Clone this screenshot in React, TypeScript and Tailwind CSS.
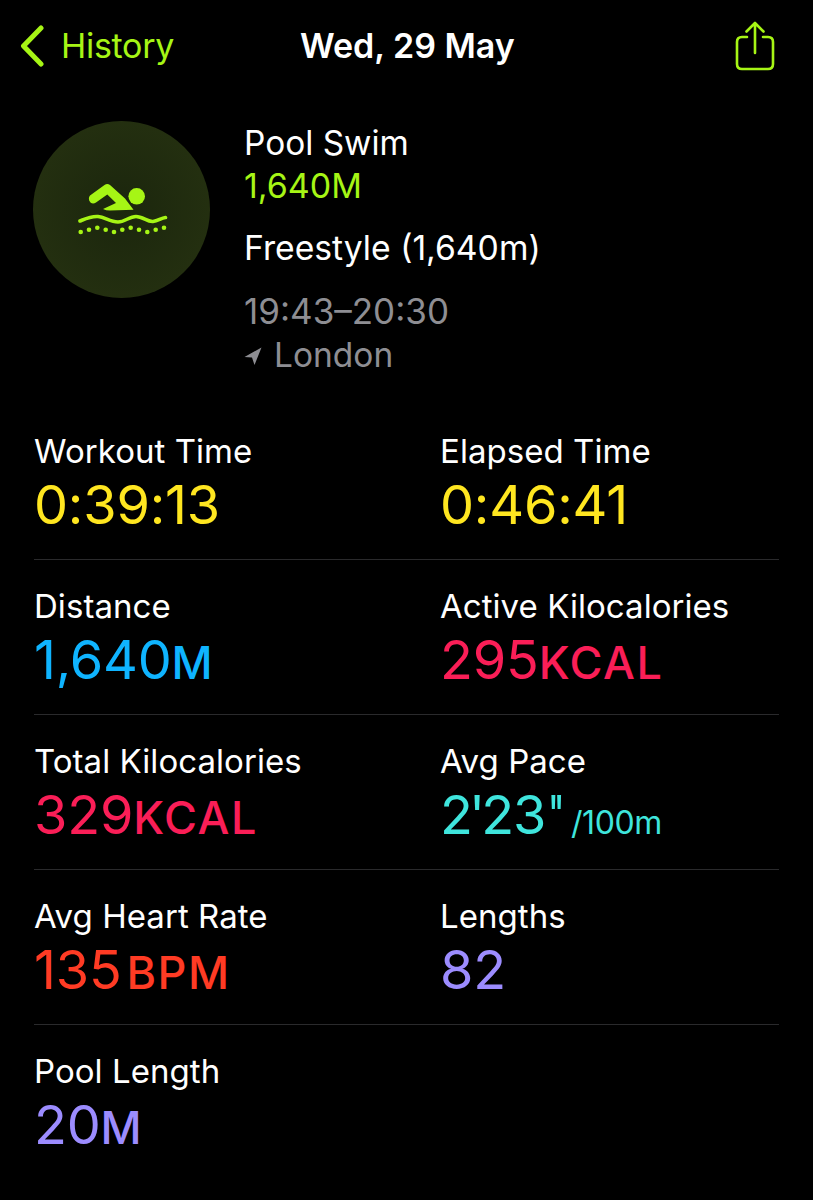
import React from "react";

type Metric = { label: string; value: string; unit?: string; color: string; wideUnit?: boolean };

const rows: Metric[][] = [
  [
    { label: "Workout Time", value: "0:39:13", color: "text-[#ffe620]" },
    { label: "Elapsed Time", value: "0:46:41", color: "text-[#ffe620]" },
  ],
  [
    { label: "Distance", value: "1,640", unit: "M", color: "text-[#0fb4ff]" },
    { label: "Active Kilocalories", value: "295", unit: "KCAL", color: "text-[#fa1e57]" },
  ],
  [
    { label: "Total Kilocalories", value: "329", unit: "KCAL", color: "text-[#fa1e57]" },
    { label: "Avg Pace", value: "", color: "text-[#3fe5dd]" },
  ],
  [
    { label: "Avg Heart Rate", value: "135", unit: "BPM", wideUnit: true, color: "text-[#ff3b24]" },
    { label: "Lengths", value: "82", color: "text-[#9c8cff]" },
  ],
  [{ label: "Pool Length", value: "20", unit: "M", color: "text-[#9c8cff]" }],
];

function Cell({ m }: { m: Metric }) {
  return (
    <div className="flex flex-col">
      <div className="text-[33px] leading-[44px] text-white tracking-[0.05px]">{m.label}</div>
      <div className={`flex items-baseline h-[62px] text-[54px] leading-[64px] tracking-[-0.2px] ${m.color}`}>
        {m.value === "" ? (
          <>
            <span className="tracking-[-4px]">2'</span>
            <span className="tracking-[-1px]">23</span>
            <span className="mr-[14px] font-light tracking-[-10px]">''</span>
            <span className="text-[32px] tracking-[-0.4px]">/100m</span>
          </>
        ) : (
          <span>{m.value}</span>
        )}
        {m.unit && (
          <span className={m.wideUnit ? "ml-[5px] text-[45px] font-medium tracking-[1.5px]" : "text-[45px] font-medium tracking-[1.5px]"}>
            {m.unit}
          </span>
        )}
      </div>
    </div>
  );
}

function SwimIcon() {
  return (
    <svg width="90" height="52" viewBox="0 0 90 52" fill="none" className="ml-[2px]">
      <circle cx="58.7" cy="12.3" r="8.3" fill="#a6f515" />
      <path
        d="M12 11.5 L26.5 1 Q29.3 -0.8 32 1 L47 14.5 L55.5 25.7 L32 26.5 Q28 26.5 25 25 L38 19 L29.3 10.5 L18 18.5 Q15 20.5 12.5 18.5 Q9.5 15 12 11.5 Z"
        fill="#a6f515"
      />
      <path
        d="M2 37 C8 34.5 13 32 20 32.5 C27 33 32 38 40 38 C47 38 51 32.5 58 32.5 C65 32.5 69 38 75 37.5 C80 37 83 34 87.5 33.5"
        stroke="#a6f515"
        strokeWidth="3.6"
        strokeLinecap="round"
      />
      {[
        [2.7, 48], [11, 45.7], [19.3, 43.7], [27.7, 45.7], [36, 48], [44.3, 45.7], [52.7, 43.7], [61, 45.7], [69.3, 48], [77.7, 45.7], [86, 43.7],
      ].map(([cx, cy]) => (
        <circle key={cx} cx={cx} cy={cy} r="2.3" fill="#a6f515" />
      ))}
    </svg>
  );
}

export default function App() {
  return (
    <div className="w-[813px] h-[1200px] overflow-hidden bg-black text-white font-['Inter','Liberation_Sans',sans-serif]">
      <header className="relative flex h-[92px] items-center justify-between pl-[20px] pr-[38px]">
        <div className="flex items-center gap-[17px] text-[#a6f515]">
          <svg width="24" height="42" viewBox="0 0 24 42" fill="none">
            <path d="M21 3 L3.5 21 L21 39" stroke="#a6f515" strokeWidth="5" strokeLinecap="round" strokeLinejoin="round" />
          </svg>
          <span className="text-[34px] leading-[40px] tracking-[-0.3px]">History</span>
        </div>
        <span className="absolute left-[300px] top-[26px] text-[34px] font-semibold leading-[40px]">Wed, 29 May</span>
        <svg width="40" height="50" viewBox="0 0 40 50" fill="none" stroke="#a6f515" strokeWidth="2.6" strokeLinecap="round" strokeLinejoin="round">
          <path d="M20 32 V2 M11.5 10.5 L20 2 L28.5 10.5" />
          <path d="M12 16 H7 Q2 16 2 21 V43 Q2 48 7 48 H33 Q38 48 38 43 V21 Q38 16 33 16 H28" />
        </svg>
      </header>

      <section className="flex pl-[33px] pt-[29px]">
        <div className="flex h-[177px] w-[177px] shrink-0 items-center justify-center rounded-full bg-[radial-gradient(circle,#1b260d_0%,#273311_100%)]">
          <SwimIcon />
        </div>
        <div className="ml-[34px] flex flex-col">
          <div className="text-[33.4px] leading-[44px]">Pool Swim</div>
          <div className="text-[34px] leading-[42px] text-[#a6f515]">1,640M</div>
          <div className="mt-[19px] text-[33.7px] leading-[44px]">Freestyle (1,640m)</div>
          <div className="mt-[19px] text-[35px] leading-[44px] text-[#8e8e93]">19:43–20:30</div>
          <div className="flex items-center text-[33.5px] leading-[44px] text-[#8e8e93]">
            <svg width="18" height="18" viewBox="0 0 18 18" className="mr-[12px] mt-[2px]">
              <path d="M17.5 0.5 L10.5 18 L8 10.5 L0.5 10 Z" fill="#8e8e93" />
            </svg>
            London
          </div>
        </div>
      </section>

      <section className="mx-[34px] mt-[28px] flex flex-col">
        {rows.map((row, i) => (
          <div key={i} className="grid h-[155px] grid-cols-[406px_1fr] border-b border-[#2a2a2c] pt-[24px] last:border-b-0">
            {row.map((m) => (
              <Cell key={m.label} m={m} />
            ))}
          </div>
        ))}
      </section>
    </div>
  );
}
